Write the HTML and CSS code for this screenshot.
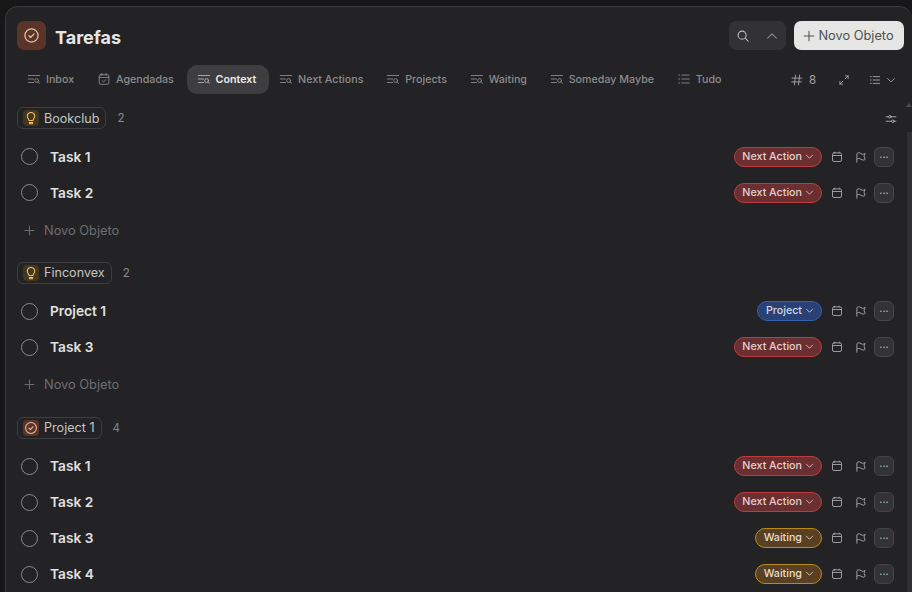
FILE: index.html
```html
<!DOCTYPE html>
<html lang="en">
<head>
    <meta charset="UTF-8">
    <meta name="viewport" content="width=device-width, initial-scale=1.0">
    <title>Tarefas</title>
    <link rel="stylesheet" href="styles.css">
</head>
<body>
    <svg class="sprite" width="0" height="0">
        <symbol id="i-check" viewBox="0 0 16 16"><circle cx="8" cy="8" r="6.2"/><path d="M5.6 8.2l1.7 1.6 3.1-3.3"/></symbol>
        <symbol id="i-bulb" viewBox="0 0 16 16"><path d="M5.8 10.800c0-1.400-2-2.400-2-5a4.200 4.200 0 0 1 8.400 0c0 2.600-2 3.600-2 5z"/><path d="M6 13.200l.6 1.300h2.800l.6-1.300z"/></symbol>
        <symbol id="i-view" viewBox="0 0 16 16"><path d="M1.500 4h13M1.500 8h6M1.500 12h6"/><circle cx="11" cy="9.800" r="2.200"/><path d="M12.600 11.400l1.800 1.500"/></symbol>
        <symbol id="i-sched" viewBox="0 0 16 16"><rect x="2.500" y="3" width="11" height="11" rx="1.500"/><path d="M2.500 6.200h11M5.500 1.600v2.400M10.500 1.600v2.400M6 10l1.500 1.400L10 8.800"/></symbol>
        <symbol id="i-list" viewBox="0 0 16 16"><path d="M5.500 3.500H14M5.500 8H14M5.500 12.500H14M2 3.500h1M2 8h1M2 12.500h1"/></symbol>
        <symbol id="i-chev" viewBox="0 0 16 16"><path d="M3.500 6l4.500 4.500L12.500 6"/></symbol>
        <symbol id="i-cal" viewBox="0 0 16 16"><rect x="2" y="2.500" width="12" height="11.500" rx="2"/><path d="M2 6h12M5 1.500v1M11 1.500v1"/></symbol>
        <symbol id="i-flag" viewBox="0 0 16 16"><path d="M2.500 15V3.500c1.500-1.500 3.500-1.500 5.500 0s4 1 5.500-.5l-1.500 4 1.500 4c-1.500 1.500-3.500 1.500-5.500 0s-4-1.500-5.500 0"/></symbol>
        <symbol id="i-plus" viewBox="0 0 16 16"><path d="M8 2.500v11M2.500 8h11"/></symbol>
        <symbol id="i-search" viewBox="0 0 16 16"><circle cx="7" cy="7" r="4.600"/><path d="M10.500 10.500l3.500 3.500"/></symbol>
        <symbol id="i-up" viewBox="0 0 16 16"><path d="M3 10.500L8 5.500l5 5"/></symbol>
        <symbol id="i-hash" viewBox="0 0 16 16"><path d="M6 1.500L4.500 14.500M11.500 1.500L10 14.500M1.500 5.500h13M1 10.500h13"/></symbol>
    </svg>

    <div class="panel">
        <!-- Header -->
        <header class="header">
            <div class="title-wrap">
                <span class="title-icon"><svg class="icon"><use href="#i-check"/></svg></span>
                <h1>Tarefas</h1>
            </div>
            <div class="header-actions">
                <div class="search-box">
                    <svg class="icon"><use href="#i-search"/></svg>
                    <svg class="icon up-icon"><use href="#i-up"/></svg>
                </div>
                <button class="new-btn"><svg class="icon"><use href="#i-plus"/></svg>Novo Objeto</button>
            </div>
        </header>

        <!-- Tabs -->
        <nav class="tabs">
            <a class="tab"><svg class="icon"><use href="#i-view"/></svg>Inbox</a>
            <a class="tab"><svg class="icon"><use href="#i-sched"/></svg>Agendadas</a>
            <a class="tab active"><svg class="icon"><use href="#i-view"/></svg>Context</a>
            <a class="tab"><svg class="icon"><use href="#i-view"/></svg>Next Actions</a>
            <a class="tab"><svg class="icon"><use href="#i-view"/></svg>Projects</a>
            <a class="tab"><svg class="icon"><use href="#i-view"/></svg>Waiting</a>
            <a class="tab"><svg class="icon"><use href="#i-view"/></svg>Someday Maybe</a>
            <a class="tab"><svg class="icon"><use href="#i-list"/></svg>Tudo</a>
            <div class="tab-tools">
                <span class="count-tool"><svg class="icon hash-icon"><use href="#i-hash"/></svg>8</span>
                <svg class="icon" viewBox="0 0 16 16"><path d="M9.500 6.500L13.500 2.500M10 2.500h3.500V6M6.500 9.500l-4 4M2.500 10v3.500H6"/></svg>
                <span class="view-tool">
                    <svg class="icon"><use href="#i-list"/></svg>
                    <svg class="icon"><use href="#i-chev"/></svg>
                </span>
            </div>
        </nav>

        <div class="scroll-area">
            <main class="content">
                <section class="group">
                    <div class="group-head">
                        <span class="group-pill"><span class="pill-icon bulb"><svg class="icon"><use href="#i-bulb"/></svg></span>Bookclub</span>
                        <span class="group-count">2</span>
                        <svg class="icon filter-icon" viewBox="0 0 16 16"><path d="M1.500 5h3M8.500 5h6M1.500 11h7M12.500 11h2"/><circle cx="6.500" cy="5" r="1.700"/><circle cx="10.500" cy="11" r="1.700"/></svg>
                    </div>
                    <div class="row">
                        <span class="check"></span><span class="row-name">Task 1</span>
                        <span class="status red">Next Action<svg class="icon"><use href="#i-chev"/></svg></span>
                        <svg class="icon row-icon"><use href="#i-cal"/></svg><svg class="icon row-icon"><use href="#i-flag"/></svg><span class="more">···</span>
                    </div>
                    <div class="row">
                        <span class="check"></span><span class="row-name">Task 2</span>
                        <span class="status red">Next Action<svg class="icon"><use href="#i-chev"/></svg></span>
                        <svg class="icon row-icon"><use href="#i-cal"/></svg><svg class="icon row-icon"><use href="#i-flag"/></svg><span class="more">···</span>
                    </div>
                    <div class="add-row"><svg class="icon"><use href="#i-plus"/></svg>Novo Objeto</div>
                </section>

                <section class="group">
                    <div class="group-head">
                        <span class="group-pill"><span class="pill-icon bulb"><svg class="icon"><use href="#i-bulb"/></svg></span>Finconvex</span>
                        <span class="group-count">2</span>
                    </div>
                    <div class="row">
                        <span class="check"></span><span class="row-name">Project 1</span>
                        <span class="status blue">Project<svg class="icon"><use href="#i-chev"/></svg></span>
                        <svg class="icon row-icon"><use href="#i-cal"/></svg><svg class="icon row-icon"><use href="#i-flag"/></svg><span class="more">···</span>
                    </div>
                    <div class="row">
                        <span class="check"></span><span class="row-name">Task 3</span>
                        <span class="status red">Next Action<svg class="icon"><use href="#i-chev"/></svg></span>
                        <svg class="icon row-icon"><use href="#i-cal"/></svg><svg class="icon row-icon"><use href="#i-flag"/></svg><span class="more">···</span>
                    </div>
                    <div class="add-row"><svg class="icon"><use href="#i-plus"/></svg>Novo Objeto</div>
                </section>

                <section class="group">
                    <div class="group-head">
                        <span class="group-pill"><span class="pill-icon task"><svg class="icon"><use href="#i-check"/></svg></span>Project 1</span>
                        <span class="group-count blue-count">4</span>
                    </div>
                    <div class="row">
                        <span class="check"></span><span class="row-name">Task 1</span>
                        <span class="status red">Next Action<svg class="icon"><use href="#i-chev"/></svg></span>
                        <svg class="icon row-icon"><use href="#i-cal"/></svg><svg class="icon row-icon"><use href="#i-flag"/></svg><span class="more">···</span>
                    </div>
                    <div class="row">
                        <span class="check"></span><span class="row-name">Task 2</span>
                        <span class="status red">Next Action<svg class="icon"><use href="#i-chev"/></svg></span>
                        <svg class="icon row-icon"><use href="#i-cal"/></svg><svg class="icon row-icon"><use href="#i-flag"/></svg><span class="more">···</span>
                    </div>
                    <div class="row">
                        <span class="check"></span><span class="row-name">Task 3</span>
                        <span class="status yellow">Waiting<svg class="icon"><use href="#i-chev"/></svg></span>
                        <svg class="icon row-icon"><use href="#i-cal"/></svg><svg class="icon row-icon"><use href="#i-flag"/></svg><span class="more">···</span>
                    </div>
                    <div class="row">
                        <span class="check"></span><span class="row-name">Task 4</span>
                        <span class="status yellow">Waiting<svg class="icon"><use href="#i-chev"/></svg></span>
                        <svg class="icon row-icon"><use href="#i-cal"/></svg><svg class="icon row-icon"><use href="#i-flag"/></svg><span class="more">···</span>
                    </div>
                </section>
            </main>
            <div class="scrollbar"><span class="scroll-up"></span><span class="scroll-thumb"></span></div>
        </div>
    </div>
</body>
</html>
```
FILE: styles.css
```css
* {
    margin: 0;
    padding: 0;
    box-sizing: border-box;
    font-family: 'Inter', 'Liberation Sans', sans-serif;
}

:root {
    --bg-color: #171717;
    --panel-color: #232325;
    --text-color: #dcdcdc;
    --muted-color: #8b8b8b;
}

html, body {
    height: 100%;
    overflow: hidden;
}

body {
    background: var(--bg-color);
    padding: 6px 0 0 5px;
}

.sprite {
    position: absolute;
}

.icon {
    width: 14px;
    height: 14px;
    flex: none;
    fill: none;
    stroke: currentColor;
    stroke-width: 1.2;
    stroke-linecap: round;
    stroke-linejoin: round;
}

.panel {
    width: 907px;
    height: 586px;
    background: var(--panel-color);
    border: 1px solid #3a3a3c;
    border-width: 1px 0 0 1px;
    border-radius: 13px 13px 0 0;
    color: var(--text-color);
    overflow: hidden;
}

.header {
    display: flex;
    justify-content: space-between;
    align-items: center;
    padding: 14px 8px 0 11px;
}

.title-wrap {
    display: flex;
    align-items: center;
    gap: 9px;
}

.title-icon {
    width: 29px;
    height: 29px;
    border-radius: 7px;
    background: #5a3428;
    color: #e9c49a;
    display: flex;
    align-items: center;
    justify-content: center;
}

.title-icon .icon {
    width: 17px;
    height: 17px;
}

h1 {
    font-size: 18px;
    font-weight: 700;
    color: #e6e6e6;
    padding-top: 4px;
}

.header-actions {
    display: flex;
    gap: 8px;
}

.search-box {
    width: 57px;
    height: 29px;
    border-radius: 7px;
    background: #323235;
    color: #c0c0c0;
    display: flex;
    align-items: center;
    justify-content: space-between;
    padding: 0 7px;
}

.up-icon {
    color: #8a8a8a;
}

.new-btn {
    width: 110px;
    height: 29px;
    border: none;
    border-radius: 7px;
    background: #e6e6e4;
    color: #505050;
    font-size: 12.800px;
    font-weight: 400;
    display: flex;
    align-items: center;
    justify-content: center;
    gap: 2px;
    padding-right: 2px;
}

.tabs {
    display: flex;
    align-items: center;
    gap: 1px;
    margin-top: 15px;
    padding-left: 12px;
}

.tab {
    height: 29px;
    padding: 0 12.750px 1px 9px;
    border-radius: 10px;
    display: flex;
    align-items: center;
    gap: 5px;
    font-size: 10.700px;
    font-weight: 500;
    color: var(--muted-color);
    white-space: nowrap;
}

.tab .icon {
    width: 14px;
    height: 14px;
    stroke-width: 1;
}

.tab.active {
    background: #3e3e40;
    color: #ececec;
    font-weight: 600;
    margin-left: -1px;
    padding-left: 10px;
}

.tab.active .icon {
    color: #b5b5b5;
}

.tab-tools {
    margin-left: auto;
    display: flex;
    align-items: center;
    color: #a8a8a8;
    padding-right: 15px;
    gap: 22px;
    font-size: 11.500px;
}

.tab-tools .icon {
    width: 12px;
    height: 12px;
}

.count-tool {
    display: flex;
    align-items: center;
    gap: 6px;
}

.view-tool {
    display: flex;
    gap: 4px;
    align-items: center;
    margin-left: -3px;
}

.scroll-area {
    display: flex;
    margin-top: 8px;
    height: 490px;
}

.content {
    flex: 1;
    padding: 5px 12px 0 11px;
}

.group {
    margin-bottom: 12.250px;
}

.group-head {
    display: flex;
    align-items: center;
    height: 22px;
    margin-bottom: 9.500px;
}

.group-pill {
    height: 22px;
    padding: 0 6px 0 5px;
    border: 1px solid #3d3d3f;
    border-radius: 6px;
    display: flex;
    align-items: center;
    gap: 5px;
    font-size: 12.600px;
    font-weight: 400;
    color: #c4c4c4;
}

.pill-icon {
    width: 16px;
    height: 16px;
    border-radius: 4px;
    display: flex;
    align-items: center;
    justify-content: center;
}

.pill-icon .icon {
    width: 14px;
    height: 14px;
}

.pill-icon.bulb {
    background: #45361f;
    color: #eec36a;
}

.pill-icon.task {
    background: #5a3428;
    color: #e9c49a;
}

.group-count {
    margin-left: 11px;
    font-size: 11.500px;
    color: var(--muted-color);
}

.blue-count {
    color: #6f86a8;
}

.filter-icon {
    margin: 2px -3px 0 auto;
    color: #b0b0b0;
    width: 12px;
    height: 12px;
}

.row {
    height: 36px;
    display: flex;
    align-items: center;
    padding: 0 0 0 4px;
}

.check {
    width: 17px;
    height: 17px;
    border: 1px solid #8a8a8a;
    border-radius: 50%;
    flex: none;
}

.row-name {
    margin-left: 12px;
    font-size: 13.700px;
    font-weight: 600;
    color: #e0e0e0;
    flex: 1;
}

.status {
    height: 20px;
    border-radius: 10px;
    border: 1px solid;
    padding: 0 6px 1px 7px;
    display: flex;
    align-items: center;
    gap: 2px;
    font-size: 10.700px;
    font-weight: 500;
}

.status .icon {
    width: 11px;
    height: 11px;
}

.status.red {
    background: #6b2f31;
    border-color: #bb3d3f;
    color: #e2cfcd;
}

.status.blue {
    background: #2b4175;
    border-color: #3560ae;
    color: #cfd8ea;
    padding-left: 8px;
}

.status.yellow {
    background: #5a4023;
    border-color: #b98a1c;
    color: #e8ddc8;
    padding-left: 8px;
}

.row-icon {
    width: 12px;
    height: 12px;
    color: #a8a8a8;
    margin-left: 9px;
}

.row-icon + .row-icon {
    margin-left: 12px;
}

.more {
    width: 20px;
    height: 20px;
    margin-left: 7px;
    border: 1px solid #46464a;
    border-radius: 6px;
    background: #333336;
    color: #b5b5b5;
    font-size: 11px;
    display: flex;
    align-items: center;
    justify-content: center;
}

.add-row {
    height: 39px;
    padding-left: 6px;
    display: flex;
    align-items: center;
    gap: 8px;
    font-size: 12.800px;
    color: #6e6e6e;
}

.add-row .icon {
    width: 13px;
    height: 13px;
}

.scrollbar {
    width: 6px;
    flex: none;
    padding-top: 1px;
    display: flex;
    flex-direction: column;
    align-items: center;
}

.scroll-up {
    width: 0;
    height: 0;
    border-left: 3px solid transparent;
    border-right: 3px solid transparent;
    border-bottom: 4px solid #4a4a4c;
}

.scroll-thumb {
    width: 5px;
    flex: 1;
    align-self: flex-end;
    margin-top: 25px;
    background: #303032;
}
```
